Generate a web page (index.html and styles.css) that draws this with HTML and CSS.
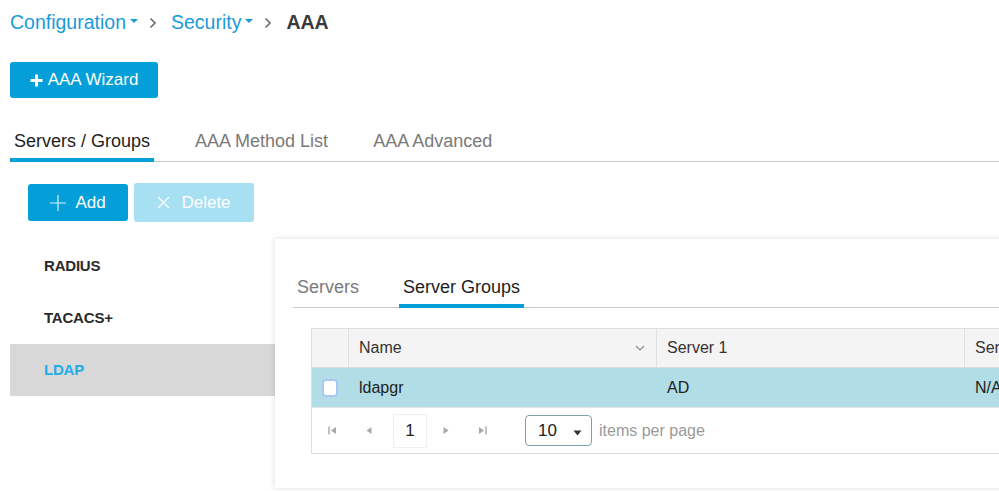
FILE: index.html
```html
<!DOCTYPE html>
<html>
<head>
<meta charset="utf-8">
<link rel="stylesheet" href="styles.css">
</head>
<body>
<div class="page">
  <nav class="crumbs">
    <span class="crumb-link">Configuration<span class="caret"></span></span>
    <svg class="sep" width="8" height="12" viewBox="0 0 8 12"><path d="M1.5 1.5 L6 6 L1.5 10.5" fill="none" stroke="#6b6b6b" stroke-width="1.6"/></svg>
    <span class="crumb-link">Security<span class="caret"></span></span>
    <svg class="sep" width="8" height="12" viewBox="0 0 8 12"><path d="M1.5 1.5 L6 6 L1.5 10.5" fill="none" stroke="#6b6b6b" stroke-width="1.6"/></svg>
    <span class="crumb-current">AAA</span>
  </nav>

  <button class="btn btn-wizard"><svg width="13" height="13" viewBox="0 0 13 13"><path d="M6.5 0.5 V12.5 M0.5 6.5 H12.5" stroke="#fff" stroke-width="3"/></svg>AAA Wizard</button>

  <div class="tabs main-tabs">
    <div class="tab active">Servers / Groups</div>
    <div class="tab">AAA Method List</div>
    <div class="tab">AAA Advanced</div>
  </div>

  <div class="actions">
    <button class="btn btn-add"><svg width="16" height="16" viewBox="0 0 16 16"><path d="M8 0 V16 M0 8 H16" stroke="#d6f1fb" stroke-width="1.2"/></svg>Add</button>
    <button class="btn btn-delete"><svg width="13" height="13" viewBox="0 0 13 13"><path d="M1 1 L12 12 M12 1 L1 12" stroke="#ffffff" stroke-width="1.1"/></svg>Delete</button>
  </div>

  <div class="content">
    <ul class="side-list">
      <li class="side-item">RADIUS</li>
      <li class="side-item">TACACS+</li>
      <li class="side-item selected">LDAP</li>
    </ul>

    <section class="card">
      <div class="tabs sub-tabs">
        <div class="tab">Servers</div>
        <div class="tab active">Server Groups</div>
      </div>

      <div class="grid">
        <div class="grid-row grid-head">
          <div class="cell cell-check"></div>
          <div class="cell cell-col">Name<svg class="sort" width="10" height="6" viewBox="0 0 10 6"><path d="M1 1 L5 5 L9 1" fill="none" stroke="#8a8a8a" stroke-width="1.1"/></svg></div>
          <div class="cell cell-col">Server 1</div>
          <div class="cell cell-col last">Server 2</div>
        </div>
        <div class="grid-row grid-data">
          <div class="cell cell-check"><span class="checkbox"></span></div>
          <div class="cell cell-col">ldapgr</div>
          <div class="cell cell-col">AD</div>
          <div class="cell cell-col last">N/A</div>
        </div>
        <div class="pager">
          <svg class="pg-icon first" width="9" height="9" viewBox="0 0 9 9"><path d="M1 0.5 V8.5" stroke="#a8a8a8" stroke-width="1.4"/><path d="M8 1 L3 4.5 L8 8 Z" fill="#a8a8a8"/></svg>
          <svg class="pg-icon prev" width="7" height="9" viewBox="0 0 7 9"><path d="M6.5 1 L1.5 4.5 L6.5 8 Z" fill="#a8a8a8"/></svg>
          <span class="pg-num">1</span>
          <svg class="pg-icon next" width="7" height="9" viewBox="0 0 7 9"><path d="M0.5 1 L5.5 4.5 L0.5 8 Z" fill="#a8a8a8"/></svg>
          <svg class="pg-icon last" width="9" height="9" viewBox="0 0 9 9"><path d="M1 1 L6 4.5 L1 8 Z" fill="#a8a8a8"/><path d="M8 0.5 V8.5" stroke="#a8a8a8" stroke-width="1.4"/></svg>
          <span class="pg-select">10<svg width="9" height="6" viewBox="0 0 9 6"><path d="M0.5 0.5 H8.5 L4.5 5.5 Z" fill="#333"/></svg></span>
          <span class="pg-label">items per page</span>
        </div>
      </div>
    </section>
  </div>
</div>
</body>
</html>
```

FILE: styles.css
```css
* { box-sizing: border-box; }
html, body {
  margin: 0;
  padding: 0;
  background: #ffffff;
  overflow: hidden;
  width: 999px;
  height: 491px;
}
body {
  font-family: "Liberation Sans", Arial, sans-serif;
  color: #222;
}
.page {
  padding-left: 10px;
}

/* breadcrumbs */
.crumbs {
  height: 45px;
  display: flex;
  align-items: center;
  font-size: 19.5px;
}
.crumb-link {
  color: #1a9bd7;
  display: inline-flex;
  align-items: center;
}
.caret {
  display: inline-block;
  width: 0;
  height: 0;
  margin-left: 4px;
  margin-top: -4px;
  border-left: 4px solid transparent;
  border-right: 4px solid transparent;
  border-top: 4px solid #1a9bd7;
}
.sep {
  margin: 0 14px 0 11px;
}
.crumb-current {
  font-weight: bold;
  color: #3a3a3c;
}

/* buttons */
.btn {
  border: none;
  border-radius: 3px;
  font-family: "Liberation Sans", Arial, sans-serif;
  color: #fff;
  display: flex;
  align-items: center;
  justify-content: center;
  padding: 0;
  cursor: pointer;
}
.btn-wizard {
  margin-top: 17px;
  width: 148px;
  height: 36px;
  background: #049fd9;
  font-size: 17px;
  gap: 5px;
}

/* tabs */
.tabs {
  display: flex;
  gap: 37px;
  border-bottom: 1px solid #c9c9c9;
}
.tab {
  padding: 0 4px;
  font-size: 18px;
  color: #7a7a7a;
  border-bottom: 4px solid transparent;
  margin-bottom: -1px;
  white-space: nowrap;
}
.tab.active {
  color: #1e1e1e;
  border-bottom-color: #049fd9;
}
.main-tabs {
  margin-top: 27px;
}
.main-tabs .tab {
  line-height: 33px;
}

/* actions */
.actions {
  display: flex;
  gap: 6px;
  margin-top: 21px;
  margin-left: 18px;
  align-items: center;
}
.btn-add {
  width: 100px;
  height: 37px;
  background: #049fd9;
  font-size: 17px;
  gap: 9px;
}
.btn-delete {
  width: 120px;
  height: 39px;
  background: #a7dff3;
  font-size: 17px;
  gap: 11px;
}

/* content */
.content {
  display: flex;
  margin-top: 17px;
  align-items: flex-start;
}
.side-list {
  list-style: none;
  margin: 1px 0 0;
  padding: 0;
  width: 265px;
  flex: none;
}
.side-item {
  height: 52px;
  line-height: 52px;
  padding-left: 34px;
  font-size: 15px;
  font-weight: bold;
  color: #2a2a2a;
  letter-spacing: -0.2px;
}
.side-item.selected {
  background: #d9d8d8;
  color: #1eade8;
}

.card {
  flex: none;
  width: 760px;
  height: 249px;
  background: #fff;
  box-shadow: 0 0 6px rgba(0, 0, 0, 0.14);
  padding-top: 31px;
}
.sub-tabs {
  margin-left: 18px;
  gap: 36px;
}
.sub-tabs .tab {
  line-height: 34px;
}

/* grid */
.grid {
  margin: 20px 0 0 36px;
  border: 1px solid #dedede;
  border-right: none;
  width: 720px;
}
.grid-row {
  display: flex;
  height: 39px;
  align-items: stretch;
}
.grid-head {
  background: #f4f4f4;
  border-bottom: 1px solid #dcdcdc;
  height: 39px;
}
.grid-data {
  background: #b1dde7;
}
.cell {
  display: flex;
  align-items: center;
  font-size: 16px;
  color: #222;
  white-space: nowrap;
  overflow: hidden;
}
.cell-check {
  width: 37px;
  flex: none;
  justify-content: center;
}
.grid-head .cell-check,
.grid-head .cell-col {
  border-right: 1px solid #e0e0e0;
}
.grid-head .cell-col {
  color: #333;
}
.cell-col {
  width: 308px;
  flex: none;
  padding-left: 10px;
  padding-right: 10px;
  justify-content: space-between;
}
.cell-col.last {
  width: 80px;
  border-right: none;
}
.sort {
  margin-right: 1px;
}
.checkbox {
  display: inline-block;
  width: 16px;
  height: 18px;
  background: #fff;
  border: 2px solid #aac6f2;
  border-radius: 4px;
  margin-left: -2px;
}

/* pager */
.pager {
  height: 46px;
  display: flex;
  align-items: center;
  padding-left: 16px;
  border-top: 1px solid #e6e6e6;
}
.pg-icon {
  flex: none;
}
.pg-icon.prev { margin-left: 28px; }
.pg-num {
  margin-left: 21px;
  width: 34px;
  height: 34px;
  display: flex;
  align-items: center;
  justify-content: center;
  font-size: 17px;
  color: #222;
  border: 1px solid #f0f0f0;
}
.pg-icon.next { margin-left: 16px; }
.pg-icon.last { margin-left: 28px; }
.pg-select {
  margin-left: 38px;
  width: 67px;
  height: 31px;
  border: 1px solid #7f9eae;
  border-radius: 4px;
  display: flex;
  align-items: center;
  justify-content: space-between;
  padding: 0 9px 0 12px;
  font-size: 17px;
  color: #222;
}
.pg-select svg { margin-top: 4px; }
.pg-label {
  margin-left: 7px;
  font-size: 16px;
  color: #9a9a9a;
}
```
